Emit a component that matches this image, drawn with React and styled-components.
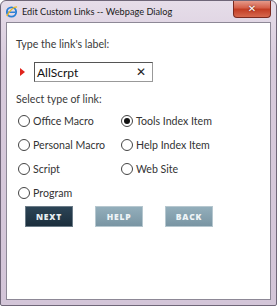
import React from 'react'
import styled, { createGlobalStyle } from 'styled-components'

const GlobalStyle = createGlobalStyle`
  html, body { margin: 0; padding: 0; background: #fff; }
  body { font-family: Lato, "Liberation Sans", sans-serif; }
`;

const Window = styled.div`
  width: 277px;
  height: 306px;
  box-sizing: border-box;
  display: flex;
  flex-direction: column;
  border: 1px solid #6f6678;
  border-radius: 6px 6px 2px 2px;
  background: linear-gradient(180deg, #e6dde9 0%, #d8cbdc 20%, #d3c5d8 100%);
  overflow: hidden;
`;

const TitleBar = styled.div`
  height: 21px;
  display: flex;
  align-items: center;
  padding-left: 4px;
  position: relative;
`;

const TitleText = styled.span`
  font-family: Lato, "Liberation Sans", sans-serif;
  font-size: 9.2px;
  color: #1b1b1b;
  margin-left: 4px;
`;

const CloseButton = styled.div`
  position: absolute;
  top: -1px;
  right: 5px;
  width: 36px;
  height: 17px;
  border: 1px solid #7a2a20;
  border-top: none;
  border-radius: 0 0 4px 4px;
  background: linear-gradient(180deg, #e8a293 0%, #d5614b 45%, #c23d24 55%, #d6684e 100%);
  display: flex;
  align-items: center;
  justify-content: center;
  color: #fff;
  font-family: "DejaVu Sans", sans-serif;
  font-weight: bold;
  font-size: 10px;
  text-shadow: 0 0 2px #5a1a10;
`;

const Body = styled.div`
  flex: 1;
  margin: 0 5px 5px 5px;
  background: #fff;
  border: 1px solid #8d8896;
  padding: 14px 0 0 9px;
  display: flex;
  flex-direction: column;
`;

const Label = styled.div`
  font-size: 10.6px;
  color: #3a3a3a;
  line-height: 14px;
`;

const InputRow = styled.div`
  display: flex;
  align-items: center;
  margin-top: 11px;
  margin-left: 4px;
`;

const Pointer = styled.span`
  width: 0;
  height: 0;
  border-top: 4px solid transparent;
  border-bottom: 4px solid transparent;
  border-left: 5px solid #e0241c;
  margin-right: 9px;
`;

const TextBox = styled.div`
  width: 119px;
  height: 20px;
  box-sizing: border-box;
  border: 1px solid #555;
  border-right-color: #999;
  border-bottom-color: #999;
  display: flex;
  align-items: center;
  justify-content: space-between;
  padding: 0 6px 0 2px;
  font-size: 12px;
  color: #111;
`;

const Clear = styled.span`
  font-family: "DejaVu Sans", sans-serif;
  font-size: 12px;
  color: #222;
`;

const SectionLabel = styled(Label)`
  margin-top: 10px;
`;

const Options = styled.div`
  display: grid;
  grid-template-columns: 103px auto;
  row-gap: 9px;
  margin-top: 7px;
  margin-left: 2px;
`;

const Option = styled.label`
  display: flex;
  align-items: center;
  font-size: 10.6px;
  color: #333;
  height: 15px;
`;

const Radio = styled.span`
  width: 10px;
  height: 10px;
  border-radius: 50%;
  border: 1px solid #444;
  margin-right: 3px;
  display: flex;
  align-items: center;
  justify-content: center;
  &::after {
    content: '';
    width: 6px;
    height: 6px;
    border-radius: 50%;
    background: ${p => (p.$checked ? '#111' : 'transparent')};
  }
`;

const Buttons = styled.div`
  display: flex;
  gap: 22px;
  margin-top: 6px;
  margin-left: 9px;
`;

const Button = styled.div`
  width: 46px;
  height: 19px;
  display: flex;
  align-items: center;
  justify-content: center;
  font-family: "Open Sans", "Liberation Sans", sans-serif;
  font-size: 8.5px;
  font-weight: 800;
  letter-spacing: 0.8px;
  color: ${p => (p.$primary ? '#e8eef2' : '#eef4f7')};
  background: ${p => (p.$primary ? 'linear-gradient(180deg, #2c4456, #1b2e3c)' : 'linear-gradient(180deg, #93aebb, #7995a3)')};
  border: 1px solid ${p => (p.$primary ? '#6c7c88' : '#b6c7cf')};
`;

const IeIcon = () => (
  <svg width="13" height="13" viewBox="0 0 14 14">
    <circle cx="7" cy="7.5" r="5" fill="none" stroke="#2a7fd4" strokeWidth="2" />
    <rect x="3" y="7" width="8" height="1.6" fill="#2a7fd4" />
    <path d="M2 12 C5 6 9 2 13 2" stroke="#e8b828" strokeWidth="1.4" fill="none" />
  </svg>
);

const options = [
  ['Office Macro', false],
  ['Tools Index Item', true],
  ['Personal Macro', false],
  ['Help Index Item', false],
  ['Script', false],
  ['Web Site', false],
  ['Program', false],
];

export default function App() {
  return (
    <>
      <GlobalStyle />
      <Window>
        <TitleBar>
          <IeIcon />
          <TitleText>Edit Custom Links -- Webpage Dialog</TitleText>
          <CloseButton>✕</CloseButton>
        </TitleBar>
        <Body>
          <Label>Type the link's label:</Label>
          <InputRow>
            <Pointer />
            <TextBox>
              <span>AllScrpt</span>
              <Clear>✕</Clear>
            </TextBox>
          </InputRow>
          <SectionLabel>Select type of link:</SectionLabel>
          <Options>
            {options.map(([name, checked]) => (
              <Option key={name}>
                <Radio $checked={checked} />
                {name}
              </Option>
            ))}
          </Options>
          <Buttons>
            <Button $primary>NEXT</Button>
            <Button>HELP</Button>
            <Button>BACK</Button>
          </Buttons>
        </Body>
      </Window>
    </>
  )
}
